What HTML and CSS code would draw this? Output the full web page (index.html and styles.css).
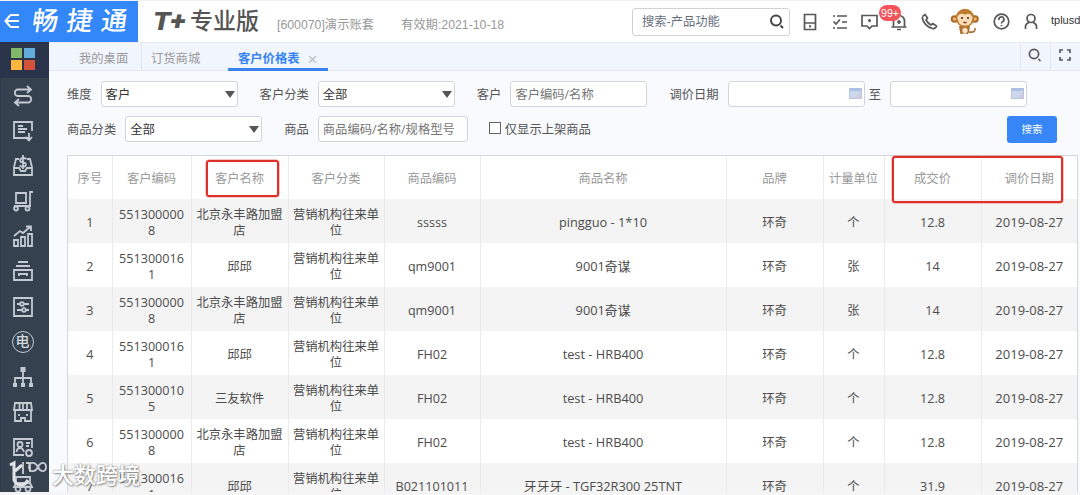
FILE: index.html
```html
<!DOCTYPE html>
<html lang="zh-CN">
<head>
<meta charset="utf-8">
<title>客户价格表</title>
<link rel="stylesheet" href="styles.css">
</head>
<body>
<div class="app">
  <header class="topbar">
    <div class="brand">
      <svg class="brand-menu" width="16" height="16" viewBox="0 0 16 16"><path d="M6 2H15M1 8H15M6 14H15M6 2.500L1.500 8L6 13.500"/></svg>
      <span class="brand-name">畅捷通</span>
    </div>
    <div class="product"><b class="product-t">T+</b><span class="product-name">专业版</span></div>
    <span class="account">[600070]演示账套</span>
    <span class="expiry">有效期:2021-10-18</span>
    <div class="search">
      <span>搜索-产品功能</span>
      <svg width="16" height="16" viewBox="0 0 16 16"><circle cx="7" cy="6.500" r="5"/><path d="M11.500 11.500L14 14"/></svg>
    </div>
    <div class="tools">
      <svg class="t-save" width="14" height="18" viewBox="0 0 14 18"><path d="M1.500 1.500H12.500V16.500H1.500ZM1.500 10H12.500M7 12V14.500"/></svg>
      <svg class="t-list" width="16" height="18" viewBox="0 0 16 18"><path d="M5 3H15M10 9H15M5 15H15M1 3H3M1 15H3M1.500 8.500L4 11L8 6.500"/></svg>
      <svg class="t-msg" width="17" height="16" viewBox="0 0 17 16"><path d="M1 1.500H16V12H11L8.500 14.500L6 12H1Z"/><circle cx="8.500" cy="6.500" r=".7"/></svg>
      <div class="bell">
        <svg width="18" height="18" viewBox="0 0 18 18"><path d="M1.500 14H16.500M3.500 14V8A5.500 5.500 0 0 1 14.500 8V14M7 16.500H11M9 7V11M7 9H11"/></svg>
        <span class="badge">99+</span>
      </div>
      <svg class="t-phone" width="17" height="17" viewBox="0 0 17 17"><path d="M4 1.500L6.500 5L5 7Q7 10.500 10 12L12 10.500L15.500 13Q14.500 16 11.500 15.500Q3 13 1.300 5Q1.500 2.500 4 1.500Z"/></svg>
      <svg class="monkey" width="30" height="28" viewBox="0 0 30 28">
        <path d="M19 24Q26 25 25 20" fill="none" stroke="#a56a28" stroke-width="1.600"/>
        <circle cx="4.500" cy="11" r="3.800" fill="#a96c28"/><circle cx="25" cy="11" r="3.800" fill="#a96c28"/>
        <circle cx="4.500" cy="11" r="1.800" fill="#efb77b"/><circle cx="25" cy="11" r="1.800" fill="#efb77b"/>
        <path d="M9 18H20L19 24Q18 27.500 16 25.500H13Q10 27.500 10 24Z" fill="#ad7029"/><circle cx="15" cy="10" r="9.300" fill="#bd7c2e"/>
        <ellipse cx="11.800" cy="10" rx="4.500" ry="4.300" fill="#fbdcb8"/><ellipse cx="18" cy="10" rx="4.500" ry="4.300" fill="#fbdcb8"/><ellipse cx="15" cy="13.500" rx="6.500" ry="4" fill="#fbdcb8"/>
        <circle cx="12" cy="10" r="1.100" fill="#4b2b1b"/><circle cx="18" cy="10" r="1.100" fill="#4b2b1b"/>
        <path d="M13.500 14Q15 15.500 16.500 14" fill="none" stroke="#8d4425"/><ellipse cx="15" cy="22.500" rx="2.600" ry="2.800" fill="#f9e6cc"/>
      </svg>
      <svg class="t-help" width="17" height="17" viewBox="0 0 17 17"><circle cx="8.500" cy="8.500" r="7.300"/><path d="M6 7A2.500 2.500 0 1 1 9.500 8.700Q8.500 9 8.500 10.500M8.500 12V13.200"/></svg>
      <svg class="t-user" width="14" height="17" viewBox="0 0 14 17"><circle cx="7" cy="5.500" r="4"/><path d="M1.500 16V13Q2 10.500 5 9.500M9 9.500Q12 10.500 12.500 13V16"/></svg>
      <span class="user">tplusd</span>
    </div>
  </header>

  <div class="body">
    <nav class="side">
      <div class="side-home"><i class="g"></i><i class="b"></i><i class="y"></i><i class="r"></i></div>
      <svg class="ic" viewBox="0 0 22 22"><path d="M15 1L19 4.500L15 8M19 4.500H6A3.200 3.200 0 0 0 6 11H16A3.200 3.200 0 0 1 16 17.500H3M7 14L3 17.500L7 21"/></svg>
      <svg class="ic" viewBox="0 0 22 22"><path d="M20 11V2H2V18H12M6 6H11M6 9H15M6 12H13M17 13V20M13.500 17L17 20.500L20 17M10 18H17"/></svg>
      <svg class="ic" viewBox="0 0 22 22"><path d="M7 4H4L2 12V20H20V12L18 4H15M2 13H7L9 16H13L15 13H20M14.500 4Q11 2 8.500 4Q7 7 11 7.500Q15 8 13.500 11Q11 13 7.500 10.500M11 0V14"/></svg>
      <svg class="ic" viewBox="0 0 22 22"><path d="M4 3H14V13H4ZM2 16H18V2H21"/><circle cx="4" cy="18.500" r="2"/><circle cx="15.500" cy="18.500" r="2"/></svg>
      <svg class="ic" viewBox="0 0 22 22"><path d="M2 15H6V21H2ZM9 12H13V21H9ZM16 9H20V21H16ZM2 11L8 6L11 8L18 2M14 1.500H19V6"/></svg>
      <svg class="ic" viewBox="0 0 22 22"><path d="M6 2H16M4 6H18M2 10H20V20H2ZM7 16V14H15V16"/></svg>
      <svg class="ic" viewBox="0 0 22 22"><path d="M2 2H20V20H2ZM5 8H8M12 8H17M5 14H10M14 14H17"/><circle cx="10" cy="8" r="1.800"/><circle cx="12" cy="14" r="1.800"/></svg>
      <div class="ic ic-text">电</div>
      <svg class="ic" viewBox="0 0 22 22"><path d="M11 6V17M3 17V12H19V17"/><path class="solid" d="M8.500 1H13.500V6H8.500ZM1 17H5V21H1ZM9 17H13V21H9ZM17 17H21V21H17Z"/></svg>
      <svg class="ic" viewBox="0 0 22 22"><path d="M3 2H19L20 9H2ZM7.500 2V9M11 2V9M15 2V9M3 10V20H9V17H13V20H19V10M7 13V15M15 13V15"/></svg>
      <svg class="ic" viewBox="0 0 22 22"><path d="M12 19H2V3H20V12M4.500 16Q5 12 8 12Q11 12 12 16M14 7H18M14 10H17"/><circle cx="8" cy="8.500" r="2.500"/><circle cx="17" cy="17" r="3"/></svg>
      <svg class="ic" viewBox="0 0 22 22"><path d="M4 6H18V12L20 16H2L4 12ZM4 12H18"/><circle cx="6" cy="18" r="2.500"/><circle cx="16" cy="18" r="2.500"/></svg>
    </nav>

    <main class="main">
      <div class="tabs">
        <span class="tab first">我的桌面</span>
        <span class="tab second">订货商城</span>
        <span class="tab active">客户价格表<i class="close">×</i></span>
        <span class="tab-tool"><svg width="14" height="14" viewBox="0 0 14 14"><circle cx="6" cy="6" r="4.600"/><path d="M10.500 11L12.500 13"/></svg></span>
        <span class="tab-tool"><svg width="12" height="12" viewBox="0 0 12 12"><path d="M1 4V1H4M8 1H11V4M11 8V11H8M4 11H1V8"/></svg></span>
      </div>

      <form class="filters">
        <div class="line">
          <label>维度</label><div class="field select f1">客户</div>
          <label class="l2">客户分类</label><div class="field select f2">全部</div>
          <label class="l3">客户</label><div class="field hint f3">客户编码/名称</div>
          <label class="l4">调价日期</label><div class="field date f4"><i class="cal"></i></div>
          <label class="l5">至</label><div class="field date f5"><i class="cal"></i></div>
        </div>
        <div class="line second-line">
          <label>商品分类</label><div class="field select f6">全部</div>
          <label class="l7">商品</label><div class="field hint f7">商品编码/名称/规格型号</div>
          <span class="check"></span><label class="l8">仅显示上架商品</label>
          <span class="submit">搜索</span>
        </div>
      </form>

      <div class="sheet">
        <table class="grid">
          <colgroup><col class="c1"><col class="c2"><col class="c3"><col class="c4"><col class="c5"><col class="c6"><col class="c7"><col class="c8"><col class="c9"><col class="c10"></colgroup>
          <thead><tr><th>序号</th><th>客户编码</th><th>客户名称</th><th>客户分类</th><th>商品编码</th><th>商品名称</th><th>品牌</th><th>计量单位</th><th>成交价</th><th>调价日期</th></tr></thead>
          <tbody>
            <tr><td>1</td><td>551300000<br>8</td><td class="zh">北京永丰路加盟<br>店</td><td class="zh">营销机构往来单<br>位</td><td>sssss</td><td class="name">pingguo - 1*10</td><td class="zh">环奇</td><td class="zh">个</td><td>12.8</td><td class="day">2019-08-27</td></tr>
            <tr><td>2</td><td>551300016<br>1</td><td class="zh">邱邱</td><td class="zh">营销机构往来单<br>位</td><td>qm9001</td><td class="name">9001奇谋</td><td class="zh">环奇</td><td class="zh">张</td><td>14</td><td class="day">2019-08-27</td></tr>
            <tr><td>3</td><td>551300000<br>8</td><td class="zh">北京永丰路加盟<br>店</td><td class="zh">营销机构往来单<br>位</td><td>qm9001</td><td class="name">9001奇谋</td><td class="zh">环奇</td><td class="zh">张</td><td>14</td><td class="day">2019-08-27</td></tr>
            <tr><td>4</td><td>551300016<br>1</td><td class="zh">邱邱</td><td class="zh">营销机构往来单<br>位</td><td>FH02</td><td class="name">test - HRB400</td><td class="zh">环奇</td><td class="zh">个</td><td>12.8</td><td class="day">2019-08-27</td></tr>
            <tr><td>5</td><td>551300010<br>5</td><td class="zh">三友软件</td><td class="zh">营销机构往来单<br>位</td><td>FH02</td><td class="name">test - HRB400</td><td class="zh">环奇</td><td class="zh">个</td><td>12.8</td><td class="day">2019-08-27</td></tr>
            <tr><td>6</td><td>551300000<br>8</td><td class="zh">北京永丰路加盟<br>店</td><td class="zh">营销机构往来单<br>位</td><td>FH02</td><td class="name">test - HRB400</td><td class="zh">环奇</td><td class="zh">个</td><td>12.8</td><td class="day">2019-08-27</td></tr>
            <tr><td>7</td><td>551300016<br>1</td><td class="zh">邱邱</td><td class="zh">营销机构往来单<br>位</td><td>B021101011</td><td class="name">牙牙牙 - TGF32R300 25TNT</td><td class="zh">环奇</td><td class="zh">个</td><td>31.9</td><td class="day">2019-08-27</td></tr>
          </tbody>
        </table>
      </div>
    </main>
  </div>
  <div class="mark mark-name"></div>
  <div class="mark mark-price"></div>
  <div class="watermark">
    <svg width="40" height="32" viewBox="0 0 40 32"><path class="thick" d="M2 7L6 5V22Q9 29 17 26L20 22M7 13L14 7"/><path d="M15 4V16M18 5H22V14M30 9C27 3 21 4 21 9S27 15 30 9S38 4 38 9S33 15 30 9"/></svg>
    <span>大数跨境</span>
  </div>
</div>
</body>
</html>
```
FILE: styles.css
```css
* { box-sizing: border-box; }
body { margin: 0; background: #f5f5f5; font: 12.3px/18px "Open Sans", "Noto Sans CJK SC", sans-serif; color: #4c4c4c; overflow: hidden; }
svg { fill: none; stroke: #575757; stroke-width: 1.7; flex: none; }
i { font-style: normal; }
.app { position: relative; width: 1080px; height: 495px; overflow: hidden; }

.topbar { display: flex; align-items: center; height: 42px; background: #fff; border-top: 1px solid #f1f1f1; white-space: nowrap; }
.brand { display: flex; align-items: center; width: 138px; height: 42px; padding-left: 4px; background: #3487f8; flex: none; align-self: flex-start; }
.brand-menu { stroke: #fff; stroke-width: 2; margin-top: -2px; }
.brand-name { margin-left: 12px; color: #fff; font-size: 26px; font-weight: 500; line-height: 38px; letter-spacing: 8.5px; transform: skewX(-8deg) translateY(-2px); }
.product { display: flex; align-items: center; width: 107px; margin-left: 15px; color: #555; flex: none; }
.product-t { width: 37px; font: italic 900 25px/28px Roboto, sans-serif; transform: scaleX(1.15); transform-origin: left; }
.product-name { font-size: 23px; font-weight: 500; line-height: 28px; transform: translateY(-2px); }
.account, .expiry { font-family: "Liberation Sans", "Noto Sans CJK SC", sans-serif; color: #999; padding-top: 6px; flex: none; }
.account { width: 124px; margin-left: 17px; }
.expiry { width: 231px; }
.search { display: flex; align-items: center; justify-content: space-between; width: 158px; height: 28px; padding: 0 4px 0 9px; border: 1px solid #d2d2d2; border-radius: 3px; color: #666e7c; flex: none; font-family: "Liberation Sans", "Noto Sans CJK SC", sans-serif; }
.search svg { stroke: #444; stroke-width: 1.9; }
.tools { display: flex; align-items: center; flex: none; }
.t-save { margin-left: 13px; }
.t-list { margin-left: 15px; }
.t-msg { margin-left: 13px; }
.bell { position: relative; display: flex; margin-left: 12px; }
.badge { position: absolute; left: -11px; top: -8px; width: 22px; height: 16px; border-radius: 8px; background: #f3545b; color: #fff; font: 10.5px/16px "Liberation Sans", sans-serif; text-align: center; }
.t-phone { margin-left: 13px; }
.monkey { margin-left: 12px; stroke: none; }
.t-help { margin-left: 13px; }
.t-user { margin-left: 14px; }
.user { margin-left: 13px; font: 11px/16px "Liberation Sans", sans-serif; color: #333; margin-top: -3px; }

.body { display: flex; height: 450px; overflow: hidden; }
.side { display: flex; flex-direction: column; align-items: center; width: 49px; background: #364150; flex: none; padding-right: 5px; border-left: 1px solid #303a4a; }
.side-home { display: grid; grid-template-columns: 11px 11px; gap: 2px; align-content: center; justify-content: center; width: 49px; height: 36px; margin: 0 -5px 7px -1px; background: #29344a; flex: none; grid-auto-rows: 10px; padding: 0 3px 3px 0; }
.g { background: #81b86b; } .b { background: #61acdc; } .y { background: #ffb63e; } .r { background: #d4523b; }
.ic { width: 22px; height: 22px; margin-bottom: 13.1px; stroke: #c3cad1; stroke-width: 1.8; flex: none; }
.solid { fill: #c3cad1; stroke: none; }
.ic-text { border: 1.5px solid #c3cad1; border-radius: 50%; color: #d2d8dd; font-size: 14px; font-weight: 500; line-height: 18px; text-align: center; }

.main { width: 1031px; background: #f8fafe; flex: none; }
.tabs { display: flex; align-items: stretch; height: 29px; background: #f1f5fd; border-top: 1px solid #e7eaf0; border-bottom: 1px solid #e3e6ee; color: #999; line-height: 32px; }
.tab.first { width: 93px; padding-left: 30px; border-right: 1px solid #e2e6ee; }
.tab.second { width: 86px; padding-left: 9px; }
.tab.active { width: 100px; margin-right: 692px; padding-left: 10px; height: 28px; border-bottom: 3px solid #3b82ec; color: #3684f3; font-weight: 700; white-space: nowrap; }
.close { margin-left: 8px; color: #bcc2ca; font: 17px/20px "Liberation Sans", sans-serif; vertical-align: -2px; }
.tab-tool { display: flex; align-items: center; justify-content: center; width: 30px; padding: 0 1px 3px 0; border-left: 1px solid #e2e6ee; }

.filters { margin: 0; height: 84px; padding: 10px 0 0 18px; }
.line { display: flex; align-items: center; height: 26px; white-space: nowrap; color: #555; }
.line label { padding-top: 1px; }
.second-line { margin-top: 9px; }
.field { position: relative; display: block; width: 137px; height: 26px; padding-left: 4px; border: 1px solid #d0d4db; border-radius: 3px; background: #fff; line-height: 25px; color: #333; flex: none; }
.select::after { content: ""; position: absolute; right: 2px; top: 9px; border: 5px solid transparent; border-top: 7px solid #555; border-bottom: 0; }
.hint { color: #757575; }
.f1, .f6 { margin-left: 9px; }
.l2 { margin-left: 22px; } .f2 { margin-left: 9px; }
.l3 { margin-left: 22px; } .f3 { margin-left: 9px; }
.l4 { margin-left: 22px; } .f4 { margin-left: 9px; }
.l5 { margin-left: 4px; } .f5 { margin-left: 9px; }
.l7 { margin-left: 22px; } .f7 { margin-left: 9px; width: 150px; }
.cal { display: block; width: 13px; height: 11px; margin: 6px 0 0 auto; border: 1px solid #b9c7e4; border-top: 3px solid #adc1e4; background: linear-gradient(135deg, #ccd6ec 60%, #dcc0c4); }
.date { padding-right: 2px; }
.check { width: 12px; height: 12px; margin: -2px 0 0 21px; border: 1px solid #646464; background: #fff; }
.l8 { margin-left: 4px; }
.submit { width: 50px; height: 27px; margin-left: 416px; border-radius: 3px; background: #3786f7; color: #fff; font-size: 10.5px; line-height: 27px; text-align: center; }

.sheet { width: 1011px; margin-left: 18px; border: 1px solid #d1d6df; border-bottom: 0; background: #fff; }
.grid { width: 1009px; table-layout: fixed; border-collapse: collapse; }
.c1 { width: 44px; } .c2 { width: 79px; } .c3, .c7, .c9 { width: 97px; } .c4, .c5 { width: 96px; } .c6 { width: 246px; } .c8 { width: 61px; } .c10 { width: 96px; }
.grid th, .grid td { padding: 0; text-align: center; vertical-align: middle; border-right: 1px solid #e9ebee; }
.grid th { height: 43px; padding-top: 3px; color: #999; font-weight: 400; }
.grid td { height: 44px; font-size: 12.6px; line-height: 16px; padding-top: 4px; }
.grid td.zh { font-size: 12.3px; }
.grid td.day { font-size: 13px; padding-top: 2px; }
.grid td.name { font-size: 12.8px; padding-top: 1px; }
.grid tr > :last-child { border-right: 0; }
.grid tbody tr:nth-child(odd) { background: #f4f4f4; }

.mark { position: absolute; border: 2.500px solid #dc3029; border-radius: 3px; box-shadow: 0 0 0 .5px #dc302988; }
.mark-name { left: 206px; top: 160px; width: 73px; height: 37px; }
.mark-price { left: 892px; top: 156px; width: 171px; height: 47px; }
.watermark { position: absolute; left: 8px; top: 458px; display: flex; align-items: center; color: #fff; }
.watermark svg { stroke: #c8cdd2; stroke-width: 1.8; }
.watermark .thick { stroke: #e1e4e7; stroke-width: 3; }
.watermark span { margin-left: 4px; font-size: 22px; font-weight: 500; line-height: 32px; text-shadow: 0 0 2px #777, 1px 1px 2px #999; }
```
